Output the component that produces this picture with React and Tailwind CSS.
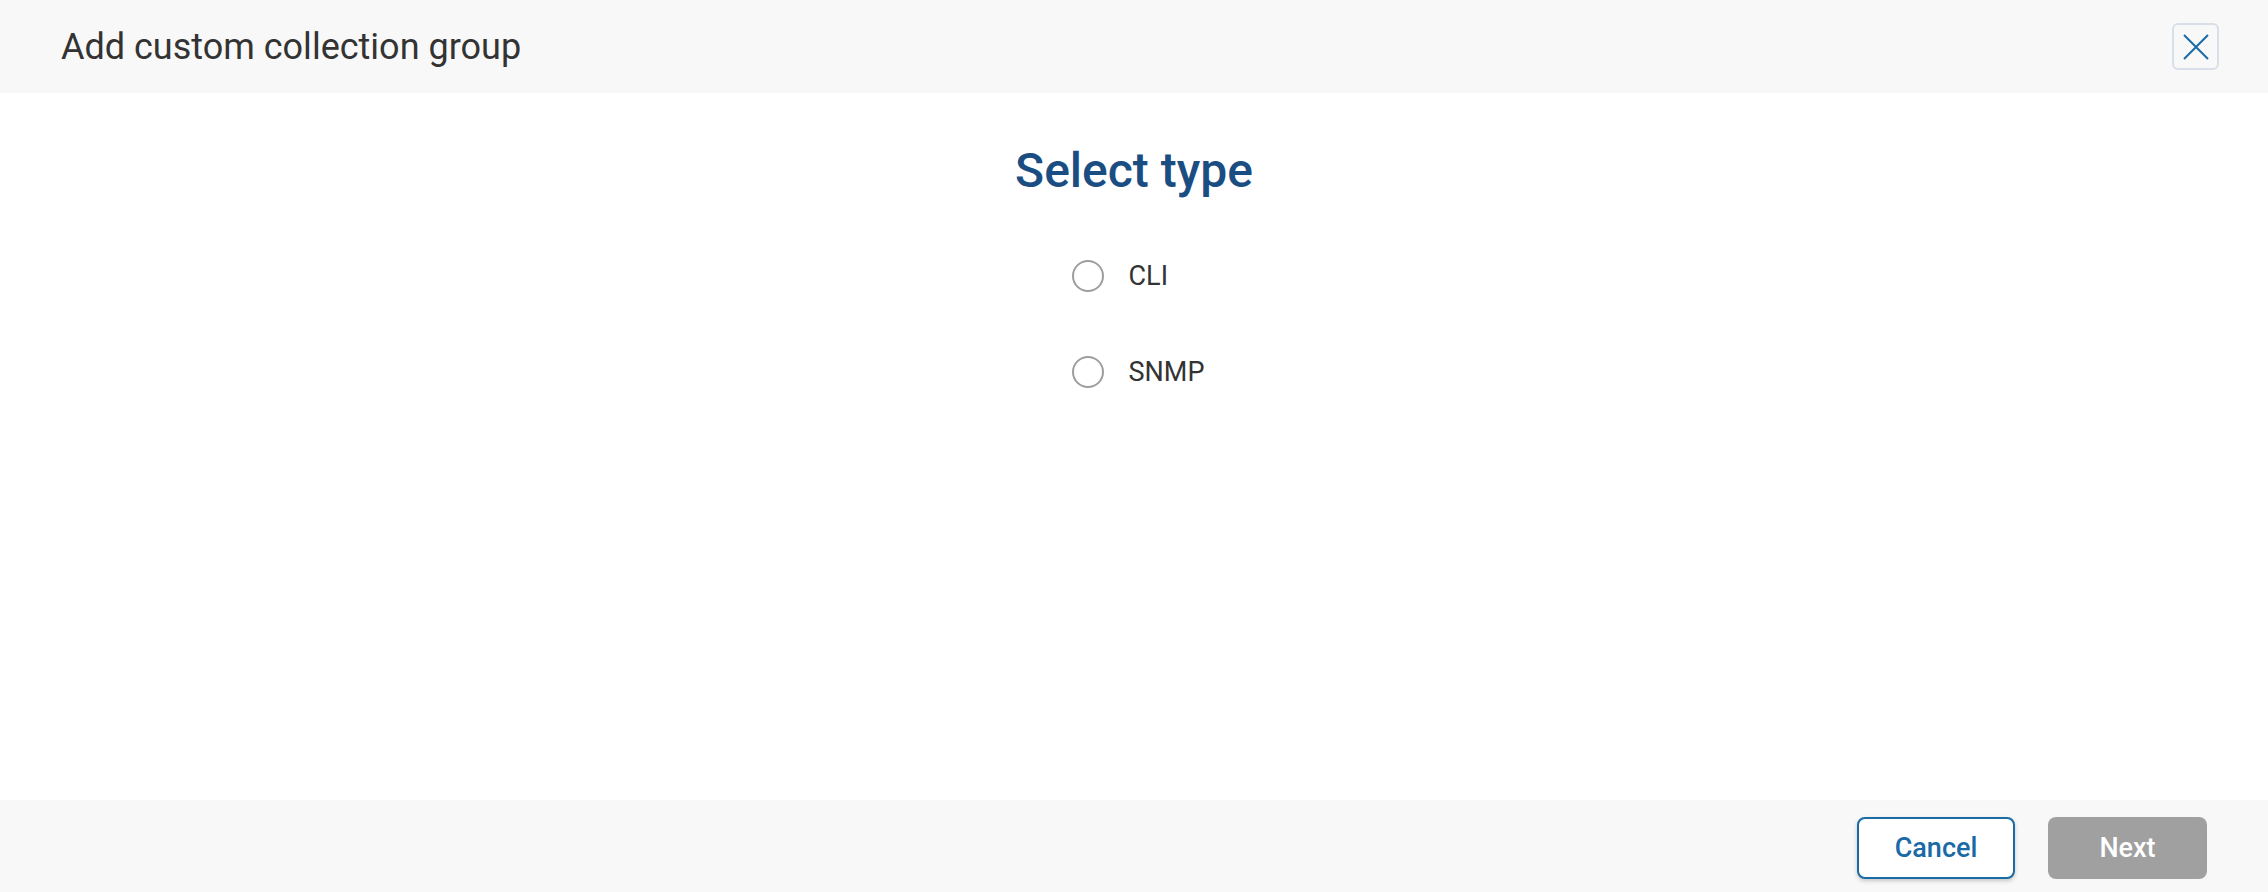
import React, { useState } from "react";

const Radio = ({ label, checked, onSelect }) => (
  <label className="flex h-[48px] cursor-pointer items-center gap-[25px]" onClick={onSelect}>
    <span className="flex h-[32px] w-[32px] items-center justify-center rounded-full border-2 border-[#9e9e9e] bg-white">
      {checked && <span className="h-[16px] w-[16px] rounded-full bg-[#1a6aa6]" />}
    </span>
    <span className="text-[27px] text-[#333333]">{label}</span>
  </label>
);

const App = () => {
  const [type, setType] = useState(null);

  return (
    <div className="flex min-h-[892px] flex-col bg-white font-['Roboto',sans-serif]">
      {/* Header */}
      <div className="flex h-[93px] items-center justify-between bg-[#f8f8f8] pl-[61px] pr-[49px]">
        <h2 className="text-[36px] font-normal text-[#333333]">Add custom collection group</h2>
        <button className="flex h-[47px] w-[47px] items-center justify-center rounded-[6px] border-2 border-[#d8dfe9] bg-[#f8f8f8]">
          <svg width="26" height="26" viewBox="0 0 26 26" fill="none" stroke="#1a6aa6" strokeWidth="2">
            <path d="M1 1L25 25M25 1L1 25" />
          </svg>
        </button>
      </div>

      {/* Body */}
      <div className="flex flex-1 flex-col items-center">
        <h1 className="mt-[50px] text-[48px] leading-[56px] font-medium text-[#1a4e82]">Select type</h1>
        <div className="mt-[53px] ml-[8px] flex w-fit flex-col gap-[48px]">
          <Radio label="CLI" checked={type === "CLI"} onSelect={() => setType("CLI")} />
          <Radio label="SNMP" checked={type === "SNMP"} onSelect={() => setType("SNMP")} />
        </div>
      </div>

      {/* Footer */}
      <div className="flex h-[92px] items-start justify-end gap-[33px] bg-[#f8f8f8] pt-[17px] pr-[61px]">
        <button className="h-[62px] w-[158px] rounded-[8px] border-2 border-[#1a6aa6] bg-white text-[27px] font-medium text-[#1a6aa6] shadow-[0_2px_4px_rgba(0,0,0,0.2)]">
          Cancel
        </button>
        <button
          disabled={!type}
          className="h-[62px] w-[159px] rounded-[8px] bg-[#a0a0a0] text-[27px] font-medium text-white"
        >
          Next
        </button>
      </div>
    </div>
  );
};

export default App;
